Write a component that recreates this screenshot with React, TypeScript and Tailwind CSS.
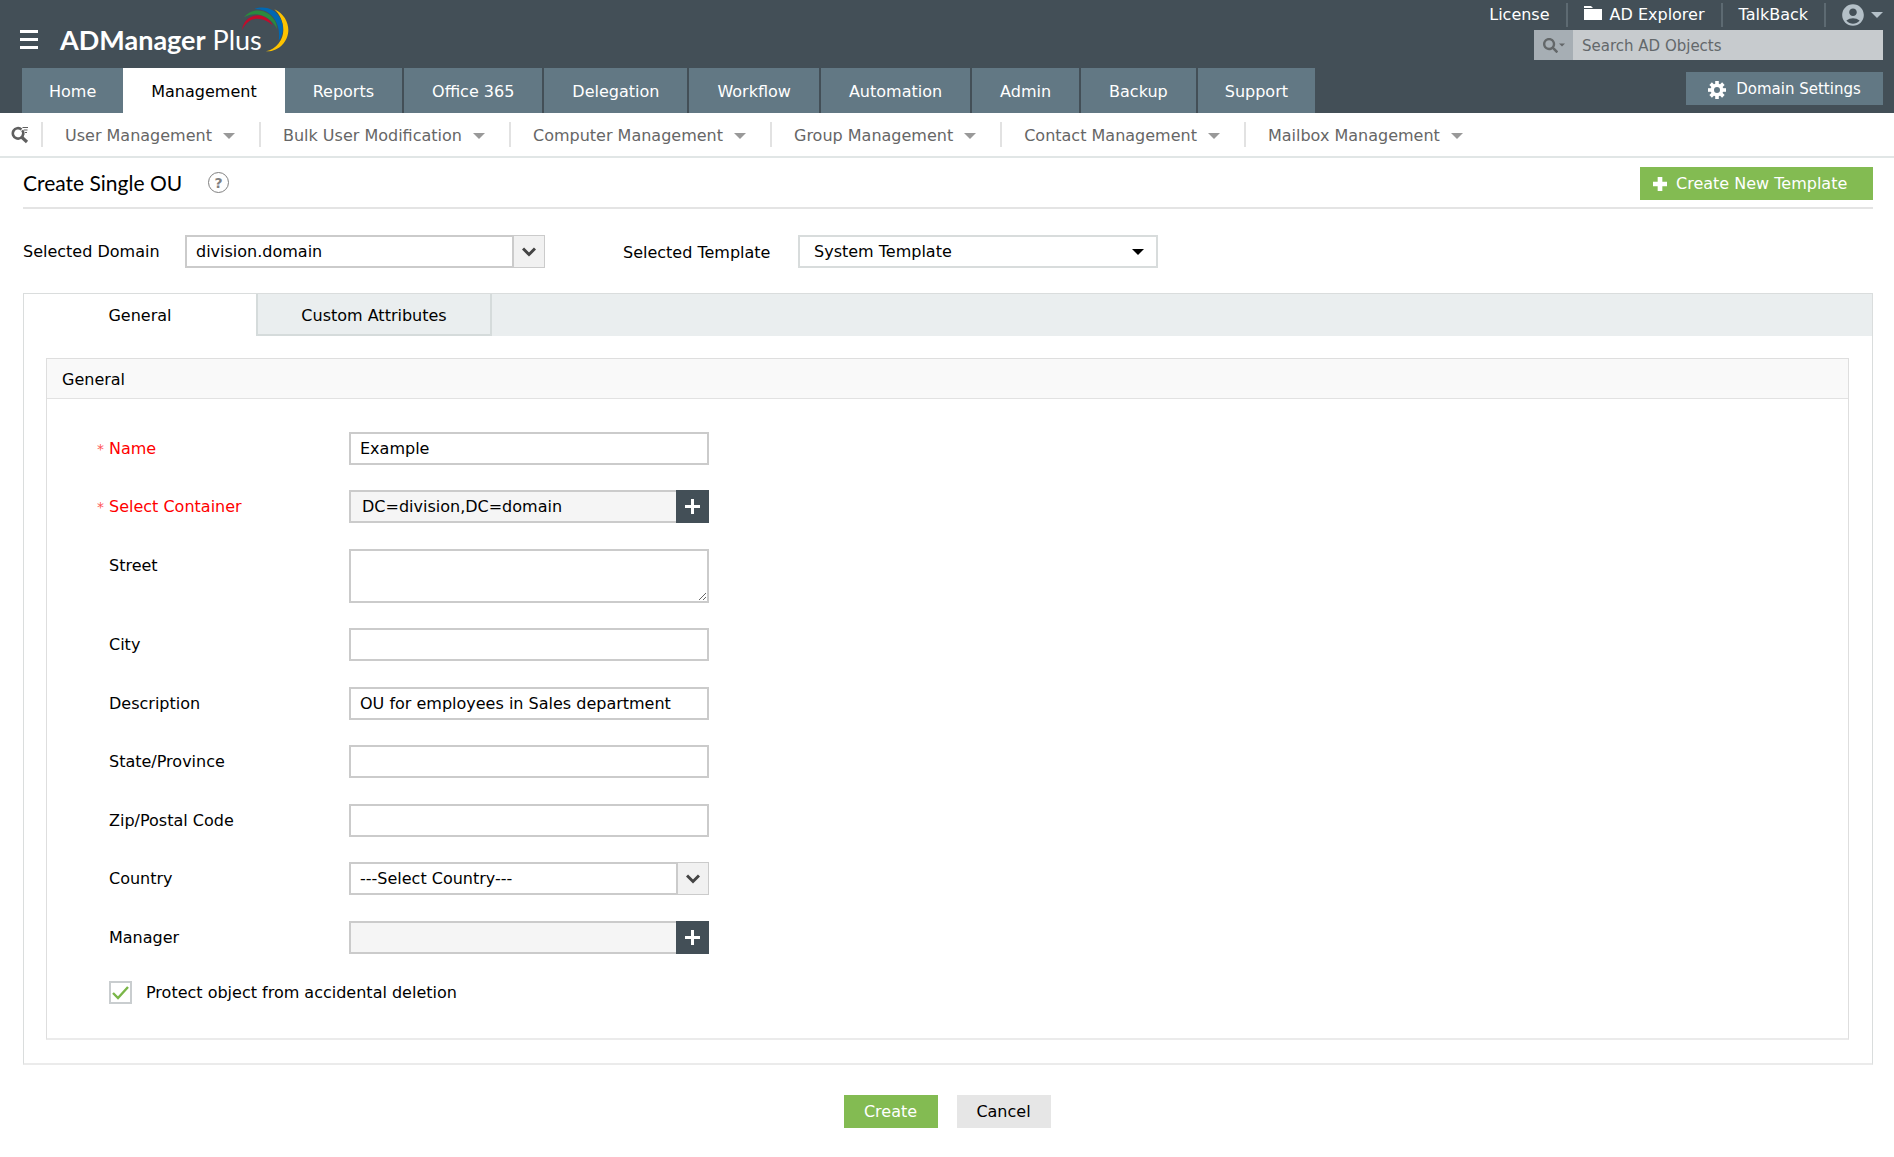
import type { ReactNode } from "react";
import { FaSearch } from "react-icons/fa";
import { MdAccountCircle } from "react-icons/md";
import clsx from "clsx";

const mainTabs = [
  "Home",
  "Management",
  "Reports",
  "Office 365",
  "Delegation",
  "Workflow",
  "Automation",
  "Admin",
  "Backup",
  "Support",
];

const subMenus = [
  "User Management",
  "Bulk User Modification",
  "Computer Management",
  "Group Management",
  "Contact Management",
  "Mailbox Management",
];

const gearTeeth = [0, 45, 90, 135, 180, 225, 270, 315];

const inputClasses = "block h-[33px] w-full border-2 border-[#cbcbcb] bg-white px-[9px] text-base text-black outline-none";

function Caret({ className }: { className?: string }) {
  return (
    <svg viewBox="0 0 12 6" className={clsx("h-[6px] w-3 shrink-0 fill-current", className)} aria-hidden="true">
      <path d="M0 0h12L6 6z" />
    </svg>
  );
}

function Chevron() {
  return (
    <svg viewBox="0 0 14 10" className="h-[10px] w-[14px]" fill="none" stroke="#444" strokeWidth="3" aria-hidden="true">
      <path d="M1 1.5l6 6 6-6" />
    </svg>
  );
}

function LogoArcs() {
  return (
    <svg viewBox="0 0 144 141" className="absolute -right-[27px] -top-[18px] h-[47px] w-12" aria-hidden="true">
      <path fill="#fdc300" d="M100 10C128 22 142 48 142 72C142 106 114 138 75 136C106 129 127 102 127 72C127 46 116 25 100 10Z" />
      <path fill="#0068b3" d="M40 9C70-2 97 8 112 28C130 52 130 80 113 104C117 78 112 54 98 35C84 17 64 9 40 9Z" />
      <path fill="#2a8a3e" d="M9 34C28 8 62 9 82 23C99 35 108 50 108 69C98 49 84 37 67 30C46 22 28 24 9 34Z" />
      <path fill="#c20b2b" d="M3 73C6 44 28 28 52 28C72 29 88 42 95 58C81 45 66 38 50 38C30 38 13 50 3 73Z" />
    </svg>
  );
}

function QuickSearchIcon() {
  return (
    <svg viewBox="0 0 18 18" className="h-[18px] w-[18px]" fill="none" stroke="#5f5f5f" aria-hidden="true">
      <path strokeWidth="2.6" d="M10.500 3.500A5.200 5.200 0 1 0 12.200 8" />
      <path strokeWidth="2.6" d="M12.300 8.200A5.200 5.200 0 0 0 11.200 4.200" />
      <path strokeWidth="3.200" d="M10.500 11l5.500 5" />
      <path strokeWidth="1.200" d="M11.500 1.500h5.500M13 4h3.500M14 6.500h2" />
    </svg>
  );
}

function FolderIcon() {
  return (
    <svg viewBox="0 0 18 18" className="h-[18px] w-[18px] fill-current" aria-hidden="true">
      <path d="M0 0h7l2 2H0z" />
      <path d="M0 3h18v11H0z" />
    </svg>
  );
}

function GearIcon() {
  return (
    <svg viewBox="0 0 18 18" className="h-[18px] w-[18px]" aria-hidden="true">
      <circle cx="9" cy="9" r="4.700" fill="none" stroke="currentColor" strokeWidth="3.400" />
      {gearTeeth.map((angle) => (
        <path key={angle} d="M7.200 0h3.600v3.500H7.200z" fill="currentColor" transform={`rotate(${angle} 9 9)`} />
      ))}
    </svg>
  );
}

function PlusIcon({ className }: { className?: string }) {
  return (
    <svg viewBox="0 0 15 15" className={clsx("fill-current", className)} aria-hidden="true">
      <path d="M5 0h5v5h5v5h-5v5H5v-5H0V5h5z" />
    </svg>
  );
}

function Field({
  id,
  label,
  required,
  children,
}: {
  id: string;
  label: string;
  required?: boolean;
  children: ReactNode;
}) {
  return (
    <div className="flex items-start odd:mb-[25px] even:mb-[26px]">
      <label
        htmlFor={id}
        className={clsx("flex h-[33px] w-[252px] shrink-0 items-center", required ? "text-[#f00]" : "text-black")}
      >
        <span className="w-3 text-sm text-[#f55]">{required && "*"}</span>
        {label}
      </label>
      <div className="w-[360px]">{children}</div>
    </div>
  );
}

function PickerInput({ id, value, label }: { id: string; value: string; label: string }) {
  return (
    <div className="flex">
      <input
        id={id}
        type="text"
        readOnly
        defaultValue={value}
        className="h-[33px] min-w-0 flex-1 border-2 border-r-0 border-[#cbcbcb] bg-[#f5f5f5] px-[11px] text-base outline-none"
      />
      <button type="button" aria-label={label} className="flex h-[33px] w-[33px] items-center justify-center bg-[#434f57] text-white">
        <svg viewBox="0 0 15 15" className="h-[15px] w-[15px] fill-current" aria-hidden="true">
          <path d="M6 0h3v6h6v3H9v6H6V9H0V6h6z" />
        </svg>
      </button>
    </div>
  );
}

function BoxSelect({ id, option }: { id: string; option: string }) {
  return (
    <div className="relative w-[360px]">
      <select id={id} className={clsx(inputClasses, "appearance-none")}>
        <option>{option}</option>
      </select>
      <span className="pointer-events-none absolute inset-y-px right-px flex w-8 items-center justify-center border-l-2 border-[#cbcbcb] bg-[#f1f1f1]">
        <Chevron />
      </span>
    </div>
  );
}

function Header() {
  return (
    <header className="flex h-[113px] justify-between bg-[#434f57] text-white">
      <div className="flex flex-col">
        <div className="flex h-[68px] items-center pl-5 pt-[10px]">
          <button type="button" aria-label="Menu" className="flex w-[18px] flex-col gap-[5px]">
            <span className="h-[3px] bg-white" />
            <span className="h-[3px] bg-white" />
            <span className="h-[3px] bg-white" />
          </button>
          <a href="#" className="relative ml-[22px] mt-[2px] font-['Lato',sans-serif] text-[27px] leading-8">
            <span className="font-bold">ADManager</span> Plus
            <LogoArcs />
          </a>
        </div>
        <nav className="ml-[22px] flex h-[45px]">
          {mainTabs.map((tab) => (
            <a
              key={tab}
              href="#"
              className={clsx(
                "flex items-center px-7 pt-[2px] first:px-[27px] last:px-[27px]",
                tab === "Management" ? "bg-white text-black" : "bg-[#627884]",
                !["Home", "Management", "Support"].includes(tab) && "border-r-2 border-[#434f57]"
              )}
            >
              {tab}
            </a>
          ))}
        </nav>
      </div>

      <div className="flex flex-col items-end pr-[11px]">
        <div className="flex h-[30px] items-center">
          <a href="#" className="pr-4">License</a>
          <a href="#" className="flex h-6 items-center gap-2 border-x-2 border-[#5d6a72] px-4">
            <FolderIcon />
            AD Explorer
          </a>
          <a href="#" className="px-4">TalkBack</a>
          <button type="button" aria-label="Account" className="flex h-6 items-center gap-[5px] border-l-2 border-[#5d6a72] pl-[14px] text-[#b4c0c8]">
            <MdAccountCircle className="h-[26px] w-[26px]" />
            <Caret />
          </button>
        </div>
        <div className="flex h-[30px] w-[349px]">
          <button type="button" aria-label="Search type" className="flex w-[39px] items-center justify-center gap-px bg-[#a6aeb4] text-[#636769]">
            <FaSearch className="h-[15px] w-[15px]" />
            <Caret className="w-[6px]" />
          </button>
          <input
            type="search"
            aria-label="Search AD Objects"
            placeholder="Search AD Objects"
            className="min-w-0 flex-1 bg-[#c7cbce] px-[9px] pt-[2px] text-[15px] outline-none placeholder:text-[#63686b]"
          />
        </div>
        <button type="button" className="mt-3 flex h-[33px] w-[197px] items-center justify-center gap-[10px] bg-[#627884] pt-[2px] text-[15px]">
          <GearIcon />
          Domain Settings
        </button>
      </div>
    </header>
  );
}

function SubMenu() {
  return (
    <nav className="flex h-[45px] items-center border-b-2 border-[#e1e6e6] pl-[11px] text-[#666]">
      <button type="button" aria-label="Quick search" className="mr-3">
        <QuickSearchIcon />
      </button>
      {subMenus.map((item) => (
        <a key={item} href="#" className="flex h-[25px] items-center gap-[11px] border-l-2 border-[#e2e2e2] pl-[22px] pr-6 pt-[2px]">
          {item}
          <Caret className="text-[#999]" />
        </a>
      ))}
    </nav>
  );
}

export default function App() {
  return (
    <div className="min-h-screen bg-white font-['DejaVu_Sans',Verdana,sans-serif] text-base text-black">
      <Header />
      <SubMenu />

      <main className="pl-[23px] pr-[21px]">
        <div className="flex h-[51px] items-center justify-between border-b-2 border-[#e4e4e4]">
          <div className="flex items-center gap-[26px]">
            <h1 className="font-['Lato',sans-serif] text-[21px] leading-7">Create Single OU</h1>
            <button type="button" aria-label="Help" className="flex h-[21px] w-[21px] items-center justify-center rounded-full border border-[#808080] text-sm font-bold leading-none text-[#808080]">
              ?
            </button>
          </div>
          <button type="button" className="mt-[2px] flex h-[33px] w-[233px] items-center gap-[9px] bg-[#83bb52] pl-[13px] text-white">
            <PlusIcon className="h-[14px] w-[14px]" />
            Create New Template
          </button>
        </div>

        <div className="flex items-center pb-[25px] pt-[26px]">
          <label htmlFor="domain" className="w-[162px]">Selected Domain</label>
          <BoxSelect id="domain" option="division.domain" />
          <label htmlFor="template" className="ml-[78px] w-[175px] pt-[2px]">Selected Template</label>
          <div className="relative w-[360px]">
            <select id="template" className="block h-[33px] w-full appearance-none border-2 border-[#d8dcdc] bg-white px-[14px] outline-none">
              <option>System Template</option>
            </select>
            <Caret className="pointer-events-none absolute right-[14px] top-[14px]" />
          </div>
        </div>

        <section className="border border-b-2 border-[#dadddd] border-b-[#ebebeb]">
          <div role="tablist" className="flex h-[42px] bg-[#eaeeef]">
            <button type="button" role="tab" aria-selected="true" className="w-[232px] bg-white pt-[2px]">General</button>
            <button type="button" role="tab" aria-selected="false" className="w-[236px] border-2 border-t-0 border-[#d5dbdb] pt-1">
              Custom Attributes
            </button>
          </div>

          <div className="ml-[22px] mr-[23px] mb-[23px] mt-[22px] border border-b-2 border-[#dedede] border-b-[#ebebeb]">
            <h2 className="h-10 border-b border-[#e2e2e2] bg-[#f9f9f9] px-[15px] leading-[42px]">General</h2>
            <form className="pb-[33px] pl-[50px] pt-[33px]">
              <Field id="name" label="Name" required>
                <input id="name" type="text" defaultValue="Example" className={inputClasses} />
              </Field>
              <Field id="container" label="Select Container" required>
                <PickerInput id="container" value="DC=division,DC=domain" label="Choose container" />
              </Field>
              <Field id="street" label="Street">
                <textarea id="street" className="block h-[54px] w-full resize border-2 border-[#cbcbcb] px-[9px] outline-none" />
              </Field>
              <Field id="city" label="City">
                <input id="city" type="text" className={inputClasses} />
              </Field>
              <Field id="description" label="Description">
                <input id="description" type="text" defaultValue="OU for employees in Sales department" className={inputClasses} />
              </Field>
              <Field id="state" label="State/Province">
                <input id="state" type="text" className={inputClasses} />
              </Field>
              <Field id="zip" label="Zip/Postal Code">
                <input id="zip" type="text" className={inputClasses} />
              </Field>
              <Field id="country" label="Country">
                <BoxSelect id="country" option="---Select Country---" />
              </Field>
              <Field id="manager" label="Manager">
                <PickerInput id="manager" value="" label="Choose manager" />
              </Field>
              <div className="flex items-center pl-3">
                <span className="relative h-[23px] w-[23px]">
                  <input id="protect" type="checkbox" defaultChecked className="peer block h-full w-full appearance-none border-2 border-[#c9cdcf] bg-white" />
                  <svg viewBox="0 0 23 23" className="pointer-events-none absolute inset-0 hidden peer-checked:block" fill="none" stroke="#7ab648" strokeWidth="2.4" aria-hidden="true">
                    <path d="M4 12l5 5L19 6" />
                  </svg>
                </span>
                <label htmlFor="protect" className="pl-[14px] pt-[2px]">Protect object from accidental deletion</label>
              </div>
            </form>
          </div>
        </section>

        <div className="flex justify-center gap-[19px] pb-[30px] pr-[2px] pt-[30px]">
          <button type="button" className="h-[33px] w-[94px] bg-[#83bb52] text-white">Create</button>
          <button type="button" className="h-[33px] w-[94px] bg-[#e6e6e6]">Cancel</button>
        </div>
      </main>
    </div>
  );
}
